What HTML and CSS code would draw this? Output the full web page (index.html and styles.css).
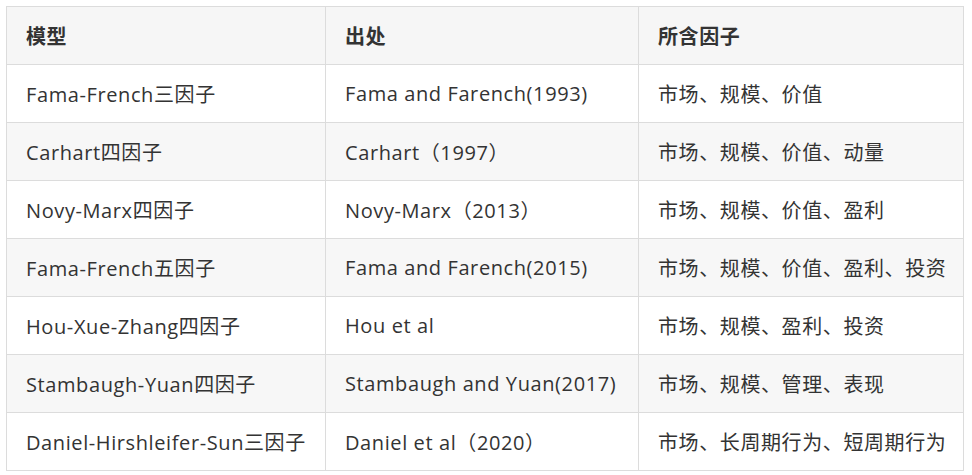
FILE: index.html
```html
<!DOCTYPE html>
<html lang="zh-CN">
<head>
<meta charset="utf-8">
<link rel="stylesheet" href="styles.css">
</head>
<body>
<table class="factor-table">
  <colgroup>
    <col class="c1"><col class="c2"><col class="c3">
  </colgroup>
  <thead>
    <tr><th>模型</th><th>出处</th><th>所含因子</th></tr>
  </thead>
  <tbody>
    <tr><td>Fama-French三因子</td><td>Fama and Farench(1993)</td><td>市场、规模、价值</td></tr>
    <tr><td>Carhart四因子</td><td>Carhart（1997）</td><td>市场、规模、价值、动量</td></tr>
    <tr><td>Novy-Marx四因子</td><td>Novy-Marx（2013）</td><td>市场、规模、价值、盈利</td></tr>
    <tr><td>Fama-French五因子</td><td>Fama and Farench(2015)</td><td>市场、规模、价值、盈利、投资</td></tr>
    <tr><td>Hou-Xue-Zhang四因子</td><td>Hou et al</td><td>市场、规模、盈利、投资</td></tr>
    <tr><td>Stambaugh-Yuan四因子</td><td>Stambaugh and Yuan(2017)</td><td>市场、规模、管理、表现</td></tr>
    <tr><td>Daniel-Hirshleifer-Sun三因子</td><td>Daniel et al（2020）</td><td>市场、长周期行为、短周期行为</td></tr>
  </tbody>
</table>
</body>
</html>
```

FILE: styles.css
```css
html, body {
  margin: 0;
  padding: 0;
  background: #ffffff;
}
body {
  padding: 6px 0 0 6px;
  font-family: "Open Sans", "Noto Sans CJK SC", sans-serif;
  color: #333333;
}
.factor-table {
  border-collapse: collapse;
  table-layout: fixed;
  width: 957px;
}
.c1 { width: 319px; }
.c2 { width: 313px; }
.c3 { width: 325px; }
.factor-table th,
.factor-table td {
  border: 1px solid #dcdcdc;
  height: 57px;
  padding: 0 0 0 19px;
  text-align: left;
  vertical-align: middle;
  font-size: 20px;
  letter-spacing: 0.6px;
  white-space: nowrap;
  overflow: hidden;
}
.factor-table th {
  font-weight: bold;
  background: #f6f6f6;
}
.factor-table tbody tr:nth-child(even) td {
  background: #f7f7f7;
}
```
